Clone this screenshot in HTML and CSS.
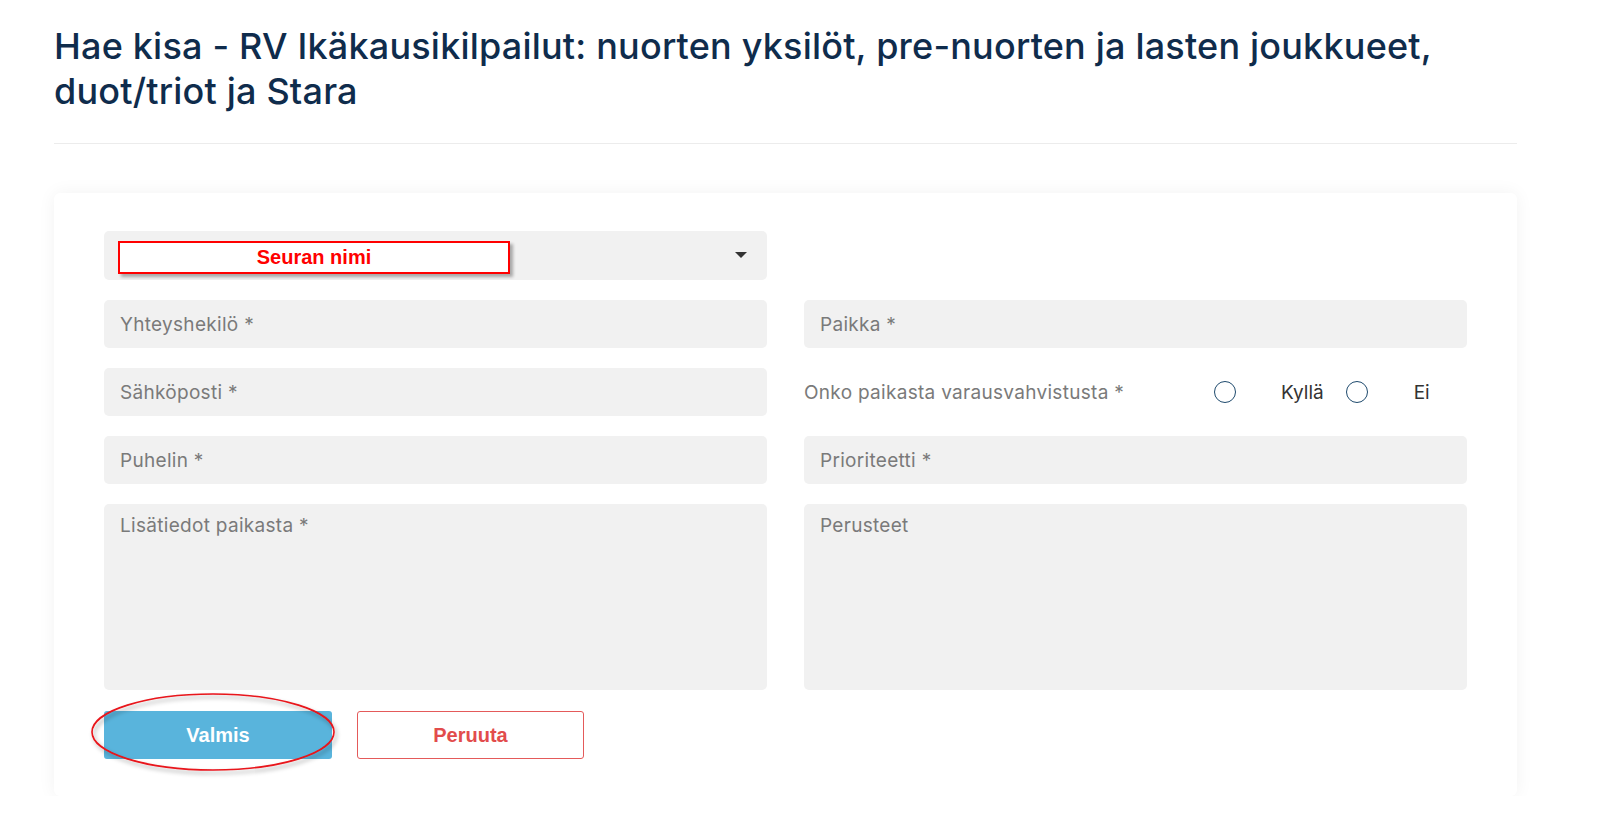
FILE: index.html
```html
<!DOCTYPE html>
<html lang="fi">
<head>
<meta charset="utf-8">
<title>Hae kisa</title>
<link rel="stylesheet" href="styles.css">
</head>
<body>
<div class="page">
  <h1 class="title">Hae kisa - RV Ikäkausikilpailut: nuorten yksilöt, pre-nuorten ja lasten joukkueet, duot/triot ja Stara</h1>
  <div class="divider"></div>
  <div class="card">
    <div class="grid">
      <div class="field select">
        <div class="annot-box">Seuran nimi</div>
        <span class="caret"></span>
      </div>
      <div></div>
      <div class="field">Yhteyshekilö *</div>
      <div class="field">Paikka *</div>
      <div class="field">Sähköposti *</div>
      <div class="radio-row">
        <span class="radio-label">Onko paikasta varausvahvistusta *</span>
        <span class="radio"></span>
        <span class="opt opt-yes">Kyllä</span>
        <span class="radio radio-2"></span>
        <span class="opt opt-no">Ei</span>
      </div>
      <div class="field">Puhelin *</div>
      <div class="field">Prioriteetti *</div>
      <div class="field area">Lisätiedot paikasta *</div>
      <div class="field area">Perusteet</div>
    </div>
    <div class="actions">
      <button class="btn btn-primary">Valmis</button>
      <button class="btn btn-outline">Peruuta</button>
      <svg class="annot-ellipse" width="262" height="90" viewBox="0 0 262 90">
        <defs>
          <filter id="sh" x="-10%" y="-20%" width="120%" height="150%">
            <feDropShadow dx="2" dy="3" stdDeviation="2" flood-color="#000" flood-opacity="0.35"/>
          </filter>
        </defs>
        <ellipse cx="126" cy="40" rx="121" ry="38" fill="none" stroke="#e8141a" stroke-width="1.6" filter="url(#sh)"/>
      </svg>
    </div>
  </div>
</div>
</body>
</html>
```

FILE: styles.css
```css
* { box-sizing: border-box; }
html, body { margin: 0; padding: 0; background: #fff; }
body {
  font-family: "Inter", "Noto Sans", "Liberation Sans", sans-serif;
  color: #333;
}
.page {
  width: 1602px;
  padding: 24px 85px 0 54px;
}
.title {
  margin: 0;
  font-family: "Inter", "Noto Sans", sans-serif;
  font-size: 36px;
  line-height: 45px;
  font-weight: 500;
  letter-spacing: 0.2px;
  color: #0f2c4c;
}
.divider {
  margin-top: 29px;
  border-top: 1px solid #ececec;
}
.card {
  margin-top: 49px;
  background: #fff;
  border-radius: 6px;
  box-shadow: 0 0 18px rgba(0, 0, 0, 0.055);
  padding: 38px 50px 37px 50px;
}
.grid {
  display: grid;
  grid-template-columns: 663px 663px;
  column-gap: 37px;
  row-gap: 20px;
  grid-template-rows: 49px 48px 48px 48px 186px;
}
.field {
  position: relative;
  background: #f1f1f1;
  border-radius: 5px;
  padding: 0 16px;
  display: flex;
  align-items: center;
  font-size: 19px;
  letter-spacing: 0.3px;
  color: #7a7a7a;
}
.field.area {
  align-items: flex-start;
  padding-top: 10px;
}
.select { padding: 0; }
.annot-box {
  position: absolute;
  left: 14px;
  top: 10px;
  width: 392px;
  height: 33px;
  background: #fff;
  border: 2px solid #f00;
  box-shadow: 3px 3px 3px rgba(0, 0, 0, 0.3);
  display: flex;
  align-items: center;
  justify-content: center;
  font-family: "Liberation Sans", Arial, sans-serif;
  font-weight: bold;
  font-size: 20px;
  letter-spacing: 0;
  color: #f00;
}
.caret {
  position: absolute;
  left: 631px;
  top: 21px;
  width: 0;
  height: 0;
  border-left: 6px solid transparent;
  border-right: 6px solid transparent;
  border-top: 6px solid #333;
}
.radio-row {
  display: flex;
  align-items: center;
  font-size: 19px;
  letter-spacing: 0.3px;
}
.radio-label {
  width: 410px;
  color: #7a7a7a;
  white-space: nowrap;
}
.radio {
  width: 22px;
  height: 22px;
  border: 1.5px solid #1e4a6d;
  border-radius: 50%;
  flex: none;
}
.opt { color: #333; letter-spacing: 0; }
.opt-yes { margin-left: 45px; }
.radio-2 { margin-left: 22px; }
.opt-no { margin-left: 46px; }
.actions {
  position: relative;
  margin-top: 21px;
  display: flex;
  gap: 25px;
}
.btn {
  height: 48px;
  border-radius: 3px;
  font-family: "Liberation Sans", Arial, sans-serif;
  font-weight: bold;
  font-size: 20px;
  cursor: pointer;
}
.btn-primary {
  width: 228px;
  background: #59b4dc;
  border: none;
  color: #fff;
}
.btn-outline {
  width: 227px;
  background: #fff;
  border: 1px solid #e45a5a;
  color: #e24c4c;
}
.annot-ellipse {
  position: absolute;
  left: -17px;
  top: -19px;
  pointer-events: none;
}
```
